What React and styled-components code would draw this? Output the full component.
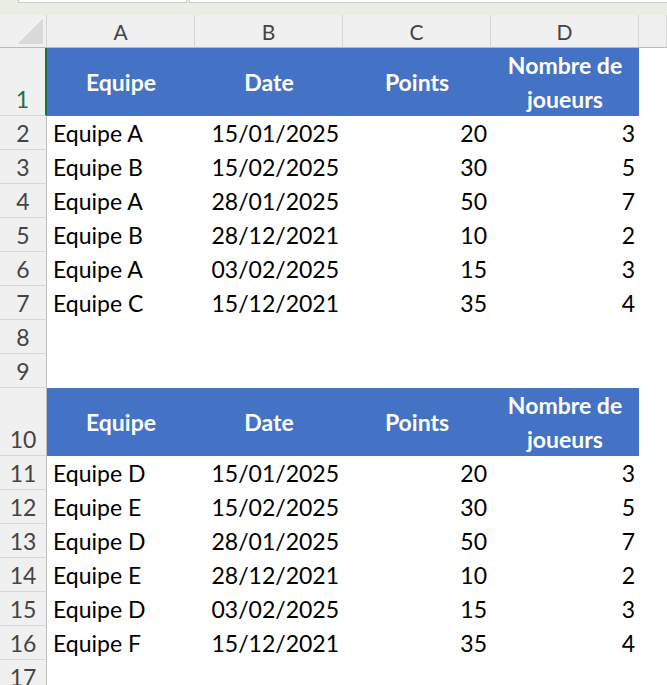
import React from "react";
import styled, { createGlobalStyle } from "styled-components";

const GlobalStyle = createGlobalStyle`
  html, body {
    margin: 0;
    padding: 0;
    background: #ffffff;
    overflow: hidden;
  }
  body {
    font-family: Lato, "Open Sans", "Liberation Sans", sans-serif;
  }
`;

const tables = [
  {
    start: 1,
    rows: [
      ["Equipe A", "15/01/2025", "20", "3"],
      ["Equipe B", "15/02/2025", "30", "5"],
      ["Equipe A", "28/01/2025", "50", "7"],
      ["Equipe B", "28/12/2021", "10", "2"],
      ["Equipe A", "03/02/2025", "15", "3"],
      ["Equipe C", "15/12/2021", "35", "4"],
    ],
  },
  {
    start: 10,
    rows: [
      ["Equipe D", "15/01/2025", "20", "3"],
      ["Equipe E", "15/02/2025", "30", "5"],
      ["Equipe D", "28/01/2025", "50", "7"],
      ["Equipe E", "28/12/2021", "10", "2"],
      ["Equipe D", "03/02/2025", "15", "3"],
      ["Equipe F", "15/12/2021", "35", "4"],
    ],
  },
];

const EmptyRow = ({ n }) => (
  <Row>
    <RowHead>{n}</RowHead>
  </Row>
);

const App = () => {
  const body = [];
  tables.forEach((t, ti) => {
    body.push(
      <Row tall key={"h" + t.start}>
        <RowHead selected={t.start === 1}>{t.start}</RowHead>
        <HeadCell>Equipe</HeadCell>
        <HeadCell>Date</HeadCell>
        <HeadCell>Points</HeadCell>
        <HeadCell>
          Nombre de
          <br />
          joueurs
        </HeadCell>
      </Row>
    );
    t.rows.forEach((r, i) => {
      body.push(
        <Row key={"r" + t.start + i}>
          <RowHead>{t.start + i + 1}</RowHead>
          <Cell>{r[0]}</Cell>
          <Cell right>{r[1]}</Cell>
          <Cell right>{r[2]}</Cell>
          <Cell right>{r[3]}</Cell>
        </Row>
      );
    });
    if (ti === 0) {
      body.push(<EmptyRow key="e8" n={8} />);
      body.push(<EmptyRow key="e9" n={9} />);
    }
  });

  return (
    <>
      <GlobalStyle />
      <Window>
        <TopStrip>
          <NameBox />
          <FormulaBox />
        </TopStrip>
        <HeaderRow>
          <Corner>
            <Triangle />
          </Corner>
          {["A", "B", "C", "D"].map((c) => (
            <ColHead key={c}>{c}</ColHead>
          ))}
          <ColHead grow />
        </HeaderRow>
        {body}
        <EmptyRow n={17} />
      </Window>
    </>
  );
};

const Window = styled.div`
  width: 667px;
  height: 685px;
  overflow: hidden;
  background: #ffffff;
`;

const TopStrip = styled.div`
  height: 15px;
  background: #e9ede4;
  display: flex;
  gap: 2px;
  padding-left: 18px;
  box-sizing: border-box;
`;

const NameBox = styled.div`
  width: 167px;
  height: 2px;
  background: #ffffff;
  border: 1px solid #c9cdc5;
  border-top: none;
`;

const FormulaBox = styled.div`
  flex: 1;
  height: 2px;
  background: #ffffff;
  border: 1px solid #c9cdc5;
  border-top: none;
  border-right: none;
`;

const HeaderRow = styled.div`
  display: flex;
  height: 33px;
`;

const Row = styled.div`
  display: flex;
  height: ${(p) => (p.tall ? "68px" : "34px")};
`;

const Corner = styled.div`
  width: 47px;
  flex: none;
  box-sizing: border-box;
  background: #f0f0f0;
  border-right: 1px solid #d4d4d4;
  border-bottom: 1px solid #b9b9b9;
  display: flex;
  align-items: flex-end;
  justify-content: flex-end;
  padding: 0 3px 3px 0;
`;

const Triangle = styled.div`
  width: 25px;
  height: 25px;
  background: linear-gradient(to bottom right, transparent 50%, #d9d9d9 50%);
`;

const ColHead = styled.div`
  width: 148px;
  flex: ${(p) => (p.grow ? "1" : "none")};
  box-sizing: border-box;
  background: #f0f0f0;
  border-right: 1px solid #d6d6d6;
  border-bottom: 1px solid #b9b9b9;
  display: flex;
  align-items: center;
  justify-content: center;
  font-size: 21px;
  color: #444444;
`;

const RowHead = styled.div`
  width: 47px;
  flex: none;
  box-sizing: border-box;
  background: #f0f0f0;
  border-bottom: 1px solid #d6d6d6;
  border-right: ${(p) => (p.selected ? "2px solid #1e7145" : "1px solid #bfbfbf")};
  display: flex;
  align-items: flex-end;
  justify-content: center;
  padding-bottom: 1px;
  font-size: 23px;
  line-height: 30px;
  color: ${(p) => (p.selected ? "#1e7145" : "#444444")};
`;

const HeadCell = styled.div`
  width: 148px;
  flex: none;
  background: #4472c4;
  color: #ffffff;
  font-weight: 700;
  font-size: 23px;
  line-height: 34px;
  display: flex;
  align-items: center;
  justify-content: center;
  text-align: center;
  white-space: nowrap;
`;

const Cell = styled.div`
  width: 148px;
  flex: none;
  box-sizing: border-box;
  display: flex;
  align-items: flex-end;
  justify-content: ${(p) => (p.right ? "flex-end" : "flex-start")};
  padding: 0 4px 1px 6px;
  font-size: 23px;
  line-height: 31px;
  color: #000000;
  white-space: nowrap;
`;

export default App;
